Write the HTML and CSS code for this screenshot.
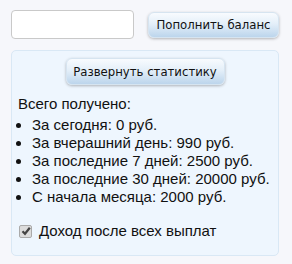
FILE: index.html
```html
<!DOCTYPE html>
<html>
<head>
<meta charset="utf-8">
<link rel="stylesheet" href="styles.css">
</head>
<body>
<div class="top">
  <input class="amount" type="text">
  <button class="btn btn-top">Пополнить баланс</button>
</div>
<div class="panel">
  <div class="center"><button class="btn btn-stat">Развернуть статистику</button></div>
  <div class="title">Всего получено:</div>
  <ul class="list">
    <li>За сегодня: 0 руб.</li>
    <li>За вчерашний день: 990 руб.</li>
    <li>За последние 7 дней: 2500 руб.</li>
    <li>За последние 30 дней: 20000 руб.</li>
    <li>С начала месяца: 2000 руб.</li>
  </ul>
  <label class="check">
    <span class="box"><svg width="10" height="10" viewBox="0 0 10 10"><path d="M1.5 5.2 L4 7.8 L8.8 1.8" fill="none" stroke="#444" stroke-width="2.2"/></svg></span>
    Доход после всех выплат
  </label>
</div>
</body>
</html>
```
FILE: styles.css
```css
html, body { margin: 0; padding: 0; }
body {
  background: #f6f7fb;
  font-family: "Liberation Sans", Arial, sans-serif;
  font-size: 15px;
  color: #111;
  width: 292px;
  height: 264px;
  overflow: hidden;
}
.top {
  display: flex;
  align-items: center;
  padding: 10px 0 0 11px;
  gap: 14px;
}
.amount {
  box-sizing: border-box;
  width: 123px;
  height: 29px;
  margin: 0;
  border: 1px solid #c9c9c9;
  border-radius: 4px;
  background: #fff;
  padding: 0 4px;
}
.btn {
  box-sizing: border-box;
  font-family: "DejaVu Sans Condensed", "DejaVu Sans", sans-serif;
  font-size: 13px;
  color: #111;
  border: 1px solid #d6e4f0;
  border-radius: 6px;
  background: linear-gradient(to bottom, #f8fbfe 0%, #e4eff9 45%, #bcd5ec 100%);
  box-shadow: 0 1px 3px rgba(0,0,0,0.28);
  padding: 0;
  margin: 0;
}
.btn-top { width: 131px; height: 26px; }
.panel {
  box-sizing: border-box;
  margin: 11px 0 0 11px;
  width: 268px;
  height: 206px;
  background: #eef6fe;
  border: 1px solid #d9e8f5;
  border-radius: 5px;
  padding: 7px 0 0 0;
}
.center { display: flex; justify-content: center; }
.btn-stat { width: 159px; height: 27px; }
.title { margin: 10px 0 0 6px; line-height: 18px; }
.list {
  margin: 3px 0 0 0;
  padding: 0 0 0 20px;
}
.list li { line-height: 18px; }
.check {
  display: flex;
  align-items: center;
  gap: 7px;
  margin: 16px 0 0 7px;
  line-height: 18px;
}
.box {
  box-sizing: border-box;
  width: 13px;
  height: 13px;
  border: 1px solid #aaa;
  border-radius: 2px;
  background: #dcdcdc;
  display: flex;
  align-items: center;
  justify-content: center;
}
```
